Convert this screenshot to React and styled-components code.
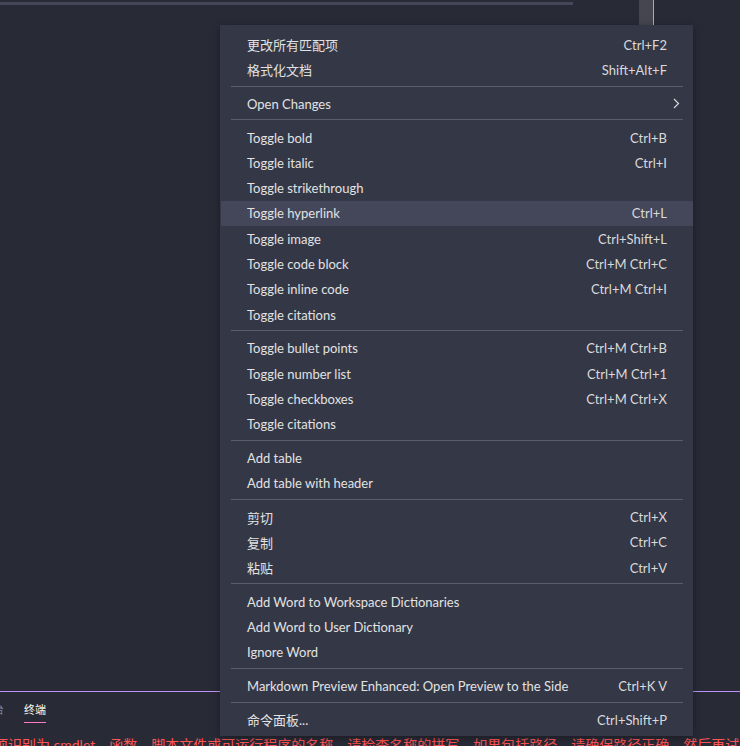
import React from "react";
import styled, { createGlobalStyle } from "styled-components";

const groups = [
  [
    { label: "更改所有匹配项", keys: "Ctrl+F2" },
    { label: "格式化文档", keys: "Shift+Alt+F" },
  ],
  [{ label: "Open Changes", submenu: true }],
  [
    { label: "Toggle bold", keys: "Ctrl+B" },
    { label: "Toggle italic", keys: "Ctrl+I" },
    { label: "Toggle strikethrough" },
    { label: "Toggle hyperlink", keys: "Ctrl+L", active: true },
    { label: "Toggle image", keys: "Ctrl+Shift+L" },
    { label: "Toggle code block", keys: "Ctrl+M Ctrl+C" },
    { label: "Toggle inline code", keys: "Ctrl+M Ctrl+I" },
    { label: "Toggle citations" },
  ],
  [
    { label: "Toggle bullet points", keys: "Ctrl+M Ctrl+B" },
    { label: "Toggle number list", keys: "Ctrl+M Ctrl+1" },
    { label: "Toggle checkboxes", keys: "Ctrl+M Ctrl+X" },
    { label: "Toggle citations" },
  ],
  [{ label: "Add table" }, { label: "Add table with header" }],
  [
    { label: "剪切", keys: "Ctrl+X" },
    { label: "复制", keys: "Ctrl+C" },
    { label: "粘贴", keys: "Ctrl+V" },
  ],
  [
    { label: "Add Word to Workspace Dictionaries" },
    { label: "Add Word to User Dictionary" },
    { label: "Ignore Word" },
  ],
  [{ label: "Markdown Preview Enhanced: Open Preview to the Side", keys: "Ctrl+K V" }],
  [{ label: "命令面板...", keys: "Ctrl+Shift+P" }],
];

const App = () => {
  return (
    <>
      <GlobalStyle />
      <Screen>
        <Editor>
          <EditorMain>
            <HScroll />
          </EditorMain>
          <VScroll />
        </Editor>

        <Panel>
          <Tabs>
            <Tab>
              <TabLabel>调试控制台</TabLabel>
            </Tab>
            <Tab>
              <TabLabel $active>终端</TabLabel>
            </Tab>
          </Tabs>
          <Terminal>
            项识别为 cmdlet、函数、脚本文件或可运行程序的名称。请检查名称的拼写，如果包括路径，请确保路径正确，然后再试一次。
          </Terminal>
        </Panel>

        <Menu>
          {groups.map((group, gi) => (
            <React.Fragment key={gi}>
              {gi > 0 && <Separator />}
              {group.map((item, i) => (
                <Item key={i} $active={item.active}>
                  <Label>{item.label}</Label>
                  {item.keys && <Keys>{item.keys}</Keys>}
                  {item.submenu && (
                    <Chevron width="7" height="11" viewBox="0 0 7 11">
                      <polyline
                        points="1,1 5.5,5.5 1,10"
                        fill="none"
                        stroke="#d6d6d6"
                        strokeWidth="1.2"
                      />
                    </Chevron>
                  )}
                </Item>
              ))}
            </React.Fragment>
          ))}
        </Menu>
      </Screen>
    </>
  );
};
export default App;

const GlobalStyle = createGlobalStyle`
  html, body {
    margin: 0;
    padding: 0;
    background: #282a36;
  }
  body {
    overflow: hidden;
  }
`;

const Screen = styled.div`
  position: relative;
  width: 740px;
  height: 746px;
  display: flex;
  flex-direction: column;
  overflow: hidden;
  background: #282a36;
  font-family: Lato, "Noto Sans CJK SC", sans-serif;
`;

const Editor = styled.div`
  flex: 1;
  display: flex;
  align-items: flex-start;
`;

const EditorMain = styled.div`
  width: 639px;
`;

const HScroll = styled.div`
  width: 573px;
  height: 3px;
  margin-top: 2px;
  background: #44475a;
`;

const VScroll = styled.div`
  width: 14px;
  height: 140px;
  background: #46464f;
  border-right: 1px solid #bd93f9;
`;

const Panel = styled.div`
  height: 55px;
  box-sizing: border-box;
  border-top: 1px solid #bd93f9;
  display: flex;
  flex-direction: column;
`;

const Tabs = styled.div`
  display: flex;
  height: 35px;
  margin-left: -61px;
`;

const Tab = styled.div`
  padding: 11px 10px 0;
`;

const TabLabel = styled.div`
  font-size: 11px;
  line-height: 13px;
  padding-bottom: 6px;
  color: ${(p) => (p.$active ? "#f8f8f2" : "#7f83a3")};
  border-bottom: 1px solid ${(p) => (p.$active ? "#ff79c6" : "transparent")};
`;

const Terminal = styled.div`
  padding-top: 12px;
  margin-left: -6px;
  font-size: 14px;
  line-height: 19px;
  color: #ff5555;
  white-space: nowrap;
`;

const Menu = styled.div`
  position: absolute;
  left: 220px;
  top: 25px;
  width: 473px;
  box-sizing: border-box;
  padding: 7px 0 4px;
  background: #343746;
  box-shadow: 0 2px 8px rgba(0, 0, 0, 0.35);
  font-size: 13px;
`;

const Item = styled.div`
  display: flex;
  align-items: center;
  justify-content: space-between;
  height: 25.3px;
  padding: 0 26px 0 26px;
  margin-left: 1px;
  color: #e2e2e2;
  background: ${(p) => (p.$active ? "#44475a" : "transparent")};
`;

const Label = styled.span`
  white-space: nowrap;
`;

const Keys = styled.span`
  white-space: nowrap;
  color: #dadada;
`;

const Chevron = styled.svg`
  display: block;
  margin-right: -13px;
`;

const Separator = styled.div`
  height: 1px;
  margin: 3px 10px 4.5px 11px;
  background: #5b5d6c;
`;
